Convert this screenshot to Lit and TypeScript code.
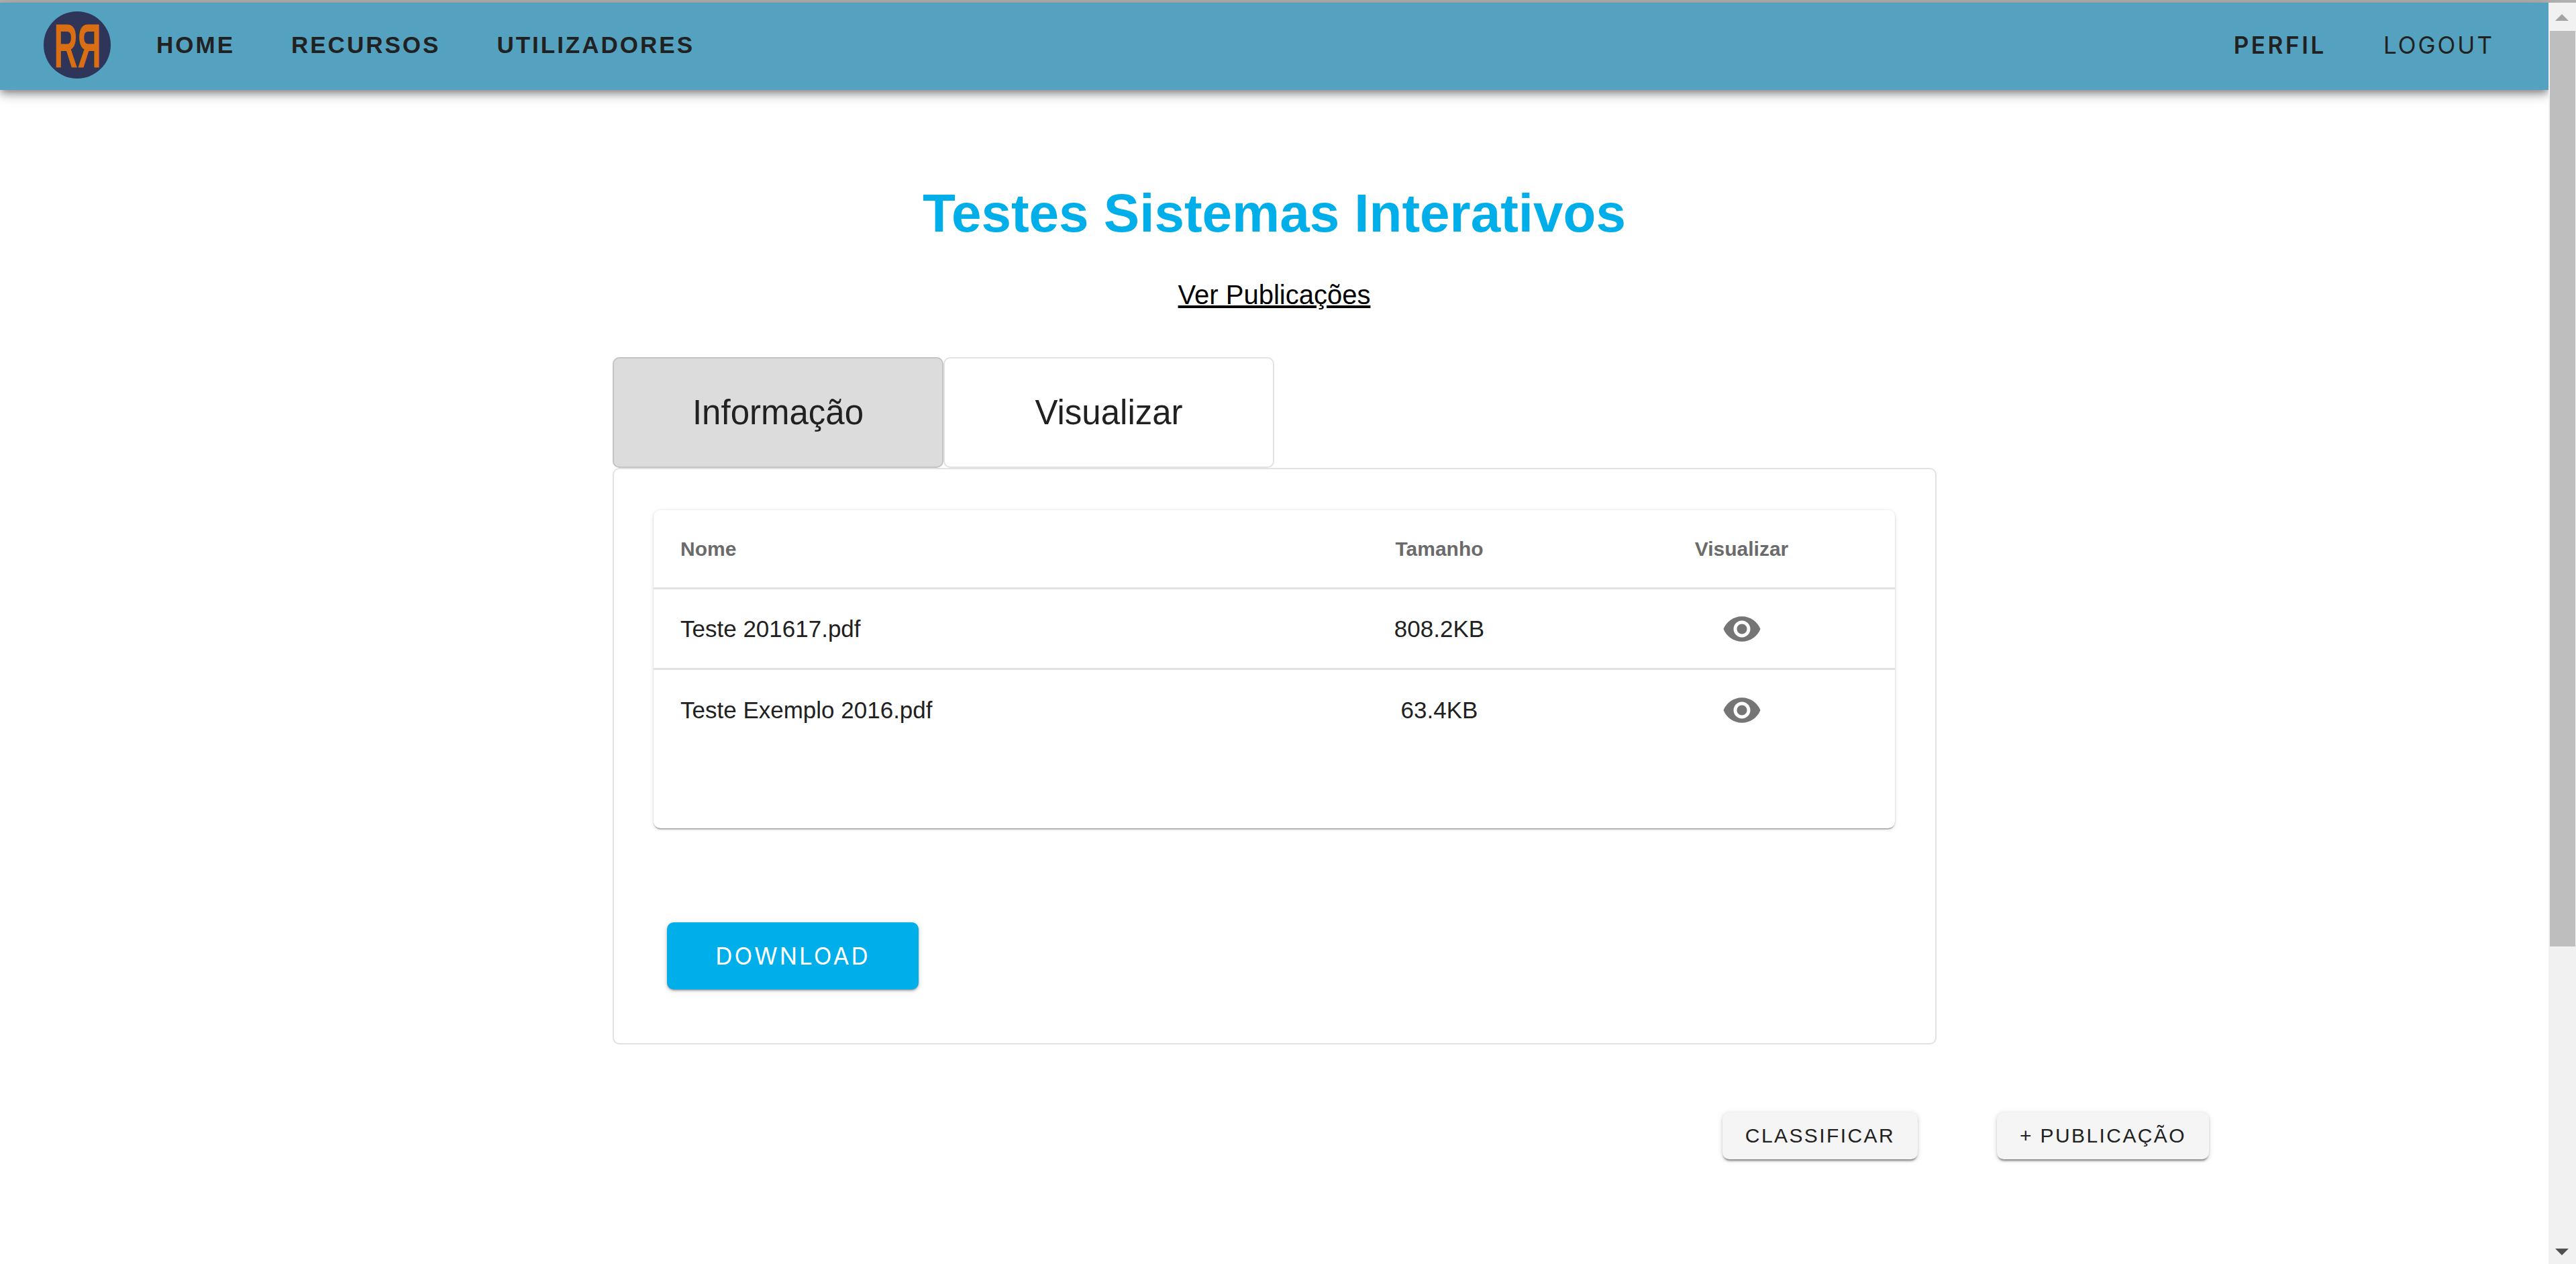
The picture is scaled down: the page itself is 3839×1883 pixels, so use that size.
import { LitElement, html, css, svg } from 'lit';
import { customElement, state } from 'lit/decorators.js';

const eyePath = svg`<path d="M12 4.5C7 4.5 2.73 7.61 1 12c1.73 4.39 6 7.5 11 7.5s9.27-3.11 11-7.5c-1.73-4.39-6-7.5-11-7.5zM12 17c-2.76 0-5-2.24-5-5s2.24-5 5-5 5 2.24 5 5-2.24 5-5 5zm0-8c-1.66 0-3 1.34-3 3s1.34 3 3 3 3-1.34 3-3-1.34-3-3-3z"></path>`;

@customElement('app-root')
export class AppRoot extends LitElement {
  @state() activeTab = 'Informação';
  @state() files = [
    { nome: 'Teste 201617.pdf', tamanho: '808.2KB' },
    { nome: 'Teste Exemplo 2016.pdf', tamanho: '63.4KB' },
  ];

  static styles = css`
    :host {
      display: block;
      height: 1883px;
      overflow: hidden;
      background: #fff;
      font-family: 'Liberation Sans', Arial, sans-serif;
      color: #212121;
    }
    .top-line {
      height: 4px;
      background: #b0b0b0;
    }
    .window {
      display: flex;
      height: 1879px;
    }
    .page {
      flex: 1;
      min-width: 0;
    }

    /* navbar */
    .nav {
      height: 130px;
      display: flex;
      align-items: center;
      padding: 0 81px 0 65px;
      background: #55a1c0;
      box-shadow: 0 5px 10px -2px rgba(0, 0, 0, 0.35), 0 10px 12px 0 rgba(0, 0, 0, 0.14), 0 2px 25px 0 rgba(0, 0, 0, 0.12);
      position: relative;
    }
    .logo {
      width: 100px;
      height: 100px;
      margin-top: -4px;
      border-radius: 50%;
      background: #2f3459;
      display: flex;
      align-items: center;
      justify-content: center;
      color: #d96f12;
      font-size: 92px;
      line-height: 100px;
      font-weight: 700;
      flex: none;
    }
    .logo span {
      display: block;
      width: 66px;
      margin: 1px -15.5px 0;
      text-align: center;
    }
    .logo .r1 {
      transform: scaleX(0.53);
    }
    .logo .r2 {
      transform: scaleX(-0.53);
    }
    .links {
      display: flex;
      margin-left: 68px;
      gap: 84px;
      flex: 1;
    }
    .link {
      font-size: 35px;
      font-weight: 700;
      letter-spacing: 3px;
      line-height: 40px;
      margin-top: -4px;
    }
    .links-right {
      display: flex;
      gap: 85px;
      font-family: Inter, sans-serif;
    }
    .links-right .link {
      font-weight: 600;
      letter-spacing: 3.6px;
    }
    .links-right .light {
      font-weight: 400;
      letter-spacing: 3px;
    }

    /* heading */
    .title {
      margin: 134px 0 46px;
      text-align: center;
      font-size: 80px;
      line-height: 100px;
      font-weight: 700;
      color: #00aee9;
    }
    .sub {
      display: block;
      text-align: center;
      font-size: 40px;
      line-height: 50px;
      color: #000;
      text-decoration: underline;
    }

    /* tabs and card */
    .content {
      width: 1973px;
      margin: 68px 0 0 913px;
    }
    .tabs {
      display: flex;
    }
    .tab {
      box-sizing: border-box;
      width: 493px;
      height: 165px;
      display: flex;
      align-items: center;
      justify-content: center;
      font-size: 51px;
      border: 2px solid #e2e2e2;
      border-radius: 10px;
      background: #fff;
    }
    .tab.active {
      background: #dcdcdc;
      border-color: #c4c4c4;
    }
    .card {
      box-sizing: border-box;
      height: 859px;
      padding: 61px 60px 80px 59px;
      border: 2px solid #e2e2e2;
      border-radius: 10px;
    }
    .table {
      height: 474px;
      width: 1850px;
      border-radius: 10px;
      box-shadow: 0 2px 2px -1px rgba(0, 0, 0, 0.45), 0 1px 4px 0 rgba(0, 0, 0, 0.12), 0 1px 8px 0 rgba(0, 0, 0, 0.06);
    }
    .row {
      box-sizing: border-box;
      display: grid;
      grid-template-columns: 949px 444px 457px;
      align-items: center;
      height: 120px;
      font-size: 35px;
      border-bottom: 3px solid #e2e2e2;
    }
    .row:last-child {
      border-bottom: none;
    }
    .row.head {
      height: 118px;
      font-size: 30px;
      font-weight: 700;
      color: #6b6b6b;
    }
    .row > div:first-child {
      padding-left: 40px;
    }
    .center {
      text-align: center;
    }
    .eye {
      display: block;
      width: 60px;
      height: 60px;
      margin: auto;
      fill: #757575;
    }
    .download {
      box-sizing: border-box;
      width: 375px;
      height: 100px;
      margin: 140px 0 0 20px;
      display: flex;
      align-items: center;
      justify-content: center;
      border-radius: 10px;
      background: #00aee9;
      color: #fff;
      font-family: Inter, sans-serif;
      font-size: 35px;
      letter-spacing: 3px;
      box-shadow: 0 2px 3px -1px rgba(0, 0, 0, 0.35), 0 2px 5px 0 rgba(0, 0, 0, 0.14), 0 1px 10px 0 rgba(0, 0, 0, 0.1);
    }

    /* bottom buttons */
    .actions {
      display: flex;
      justify-content: flex-end;
      gap: 118px;
      margin-top: 101px;
      padding-right: 506px;
    }
    .action {
      box-sizing: border-box;
      height: 70px;
      padding: 0 34px;
      display: flex;
      align-items: center;
      border-radius: 10px;
      background: #f5f5f5;
      font-size: 30px;
      letter-spacing: 2.4px;
      box-shadow: 0 4px 3px -2px rgba(0, 0, 0, 0.4), 0 2px 5px 0 rgba(0, 0, 0, 0.14), 0 1px 10px 0 rgba(0, 0, 0, 0.1);
    }

    /* scrollbar */
    .scrollbar {
      flex: none;
      width: 41px;
      background: #f1f1f1;
      position: relative;
    }
    .arrow {
      position: absolute;
      left: 10px;
      width: 0;
      height: 0;
      border-left: 10px solid transparent;
      border-right: 10px solid transparent;
    }
    .arrow.up {
      top: 17px;
      border-bottom: 10px solid #a3a3a3;
    }
    .arrow.down {
      bottom: 13px;
      border-top: 10px solid #505050;
    }
    .thumb {
      position: absolute;
      top: 42px;
      left: 2px;
      width: 38px;
      height: 1364px;
      background: #bebebe;
    }
  `;

  render() {
    return html`
      <div class="top-line"></div>
      <div class="window">
        <div class="page">
          ${this.renderNav()}
          <h1 class="title">Testes Sistemas Interativos</h1>
          <a class="sub">Ver Publicações</a>
          <div class="content">
            <div class="tabs">
              ${['Informação', 'Visualizar'].map(
                (t) => html`<div class="tab ${t === this.activeTab ? 'active' : ''}">${t}</div>`
              )}
            </div>
            <div class="card">
              ${this.renderTable()}
              <div class="download">DOWNLOAD</div>
            </div>
          </div>
          <div class="actions">
            <div class="action">CLASSIFICAR</div>
            <div class="action">+ PUBLICAÇÃO</div>
          </div>
        </div>
        <div class="scrollbar">
          <div class="arrow up"></div>
          <div class="thumb"></div>
          <div class="arrow down"></div>
        </div>
      </div>
    `;
  }

  renderNav() {
    return html`
      <nav class="nav">
        <div class="logo"><span class="r1">R</span><span class="r2">R</span></div>
        <div class="links">
          <span class="link">HOME</span>
          <span class="link">RECURSOS</span>
          <span class="link">UTILIZADORES</span>
        </div>
        <div class="links-right">
          <span class="link">PERFIL</span>
          <span class="link light">LOGOUT</span>
        </div>
      </nav>
    `;
  }

  renderTable() {
    return html`
      <div class="table">
        <div class="row head">
          <div>Nome</div>
          <div class="center">Tamanho</div>
          <div class="center">Visualizar</div>
        </div>
        ${this.files.map(
          (f) => html`
            <div class="row">
              <div>${f.nome}</div>
              <div class="center">${f.tamanho}</div>
              <div><svg class="eye" viewBox="0 0 24 24">${eyePath}</svg></div>
            </div>
          `
        )}
      </div>
    `;
  }
}
